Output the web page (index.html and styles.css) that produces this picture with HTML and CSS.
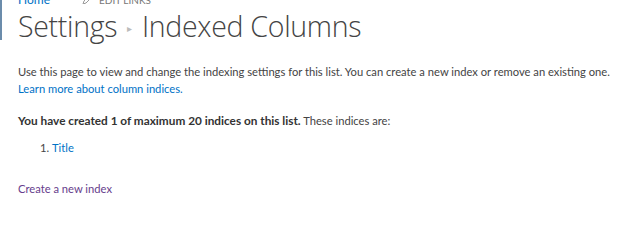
FILE: index.html
```html
<!DOCTYPE html>
<html>
<head>
<meta charset="utf-8">
<link rel="stylesheet" href="styles.css">
</head>
<body>
<div class="page">
  <div class="head">
    <div class="topnav">
      <a class="home">Home</a>
      <span class="edit"><svg width="9" height="9" viewBox="0 0 9 9"><path d="M1 8 L2 5 L6 1 L8 3 L4 7 Z" fill="none" stroke="#999" stroke-width="1"/></svg>EDIT LINKS</span>
    </div>
    <h1 class="title">Settings<span class="sep">&#9656;</span>Indexed Columns</h1>
  </div>
  <div class="content">
    <p class="intro">Use this page to view and change the indexing settings for this list. You can create a new index or remove an existing one.<br><a class="link">Learn more about column indices.</a></p>
    <p class="count"><b>You have created 1 of maximum 20 indices on this list.</b> These indices are:</p>
    <ol class="indices"><li><a class="link">Title</a></li></ol>
    <a class="create">Create a new index</a>
  </div>
</div>
</body>
</html>
```
FILE: styles.css
```css
html, body { margin: 0; padding: 0; background: #fff; }
body { font-family: "Lato", "Segoe UI", sans-serif; color: #444; }
.page { width: 624px; height: 211px; overflow: hidden; }
.head { border-left: 2px solid #6b8cab; height: 40px; padding-left: 16px; box-sizing: border-box; }
.topnav { display: flex; align-items: flex-end; height: 4px; overflow: hidden; font-size: 12px; line-height: 14px; }
.home { color: #0072c6; width: 64px; margin-bottom: -3px; }
.edit { color: #777; font-size: 10px; margin-bottom: -3px; display: flex; align-items: center; gap: 8px; }
.title { margin: 4px 0 0; font-family: "Open Sans", sans-serif; font-weight: 300; font-size: 28.5px; line-height: 36px; color: #444; letter-spacing: -0.3px; white-space: nowrap; }
.sep { font-size: 10px; color: #bbb; margin: 0 10px; vertical-align: 5px; }
.content { padding-left: 18px; font-size: 11.2px; line-height: 17px; }
.intro { margin: 23px 0 0; white-space: nowrap; }
.link { color: #0072c6; }
.count { margin: 15px 0 0; }
.count b { font-weight: 700; color: #333; font-size: 11.8px; }
.indices { margin: 10px 0 0; padding-left: 34px; }
.create { display: block; margin-top: 24px; color: #663d8c; }
```
